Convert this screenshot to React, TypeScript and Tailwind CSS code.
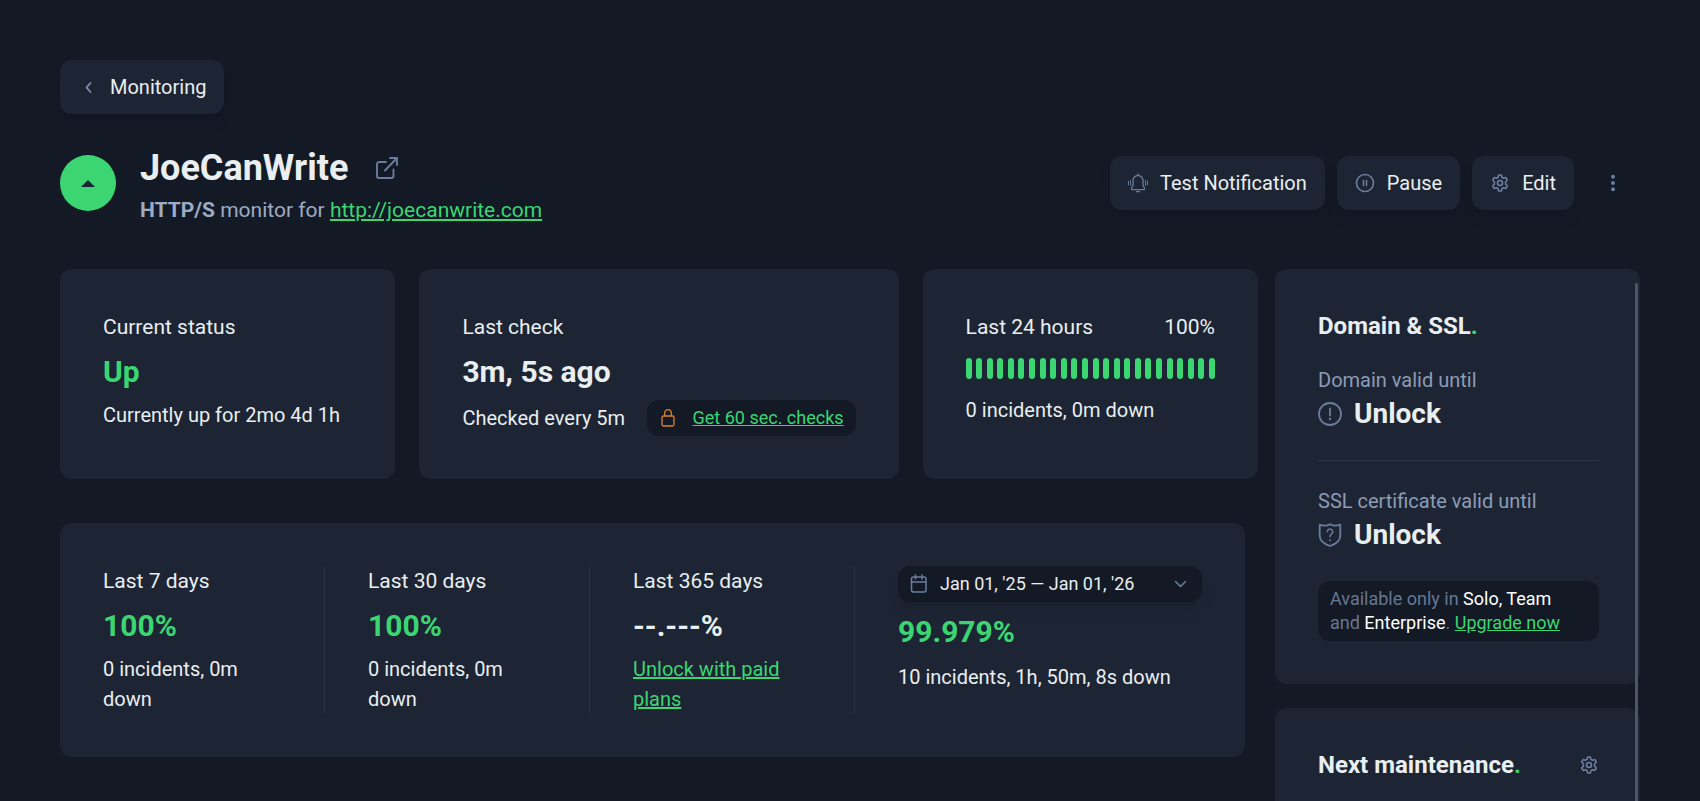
import { ReactNode } from "react";

const HOURS = Array.from({ length: 24 }, (_, hour) => hour);

interface IconProps {
  className?: string;
}

function ChevronLeftIcon({ className }: IconProps) {
  return (
    <svg className={className} viewBox="0 0 20 20" fill="none" stroke="currentColor" strokeWidth="1.8" strokeLinecap="round" strokeLinejoin="round" aria-hidden="true">
      <path d="M12.500 6l-4 4.500 4 4.500" />
    </svg>
  );
}

function ChevronDownIcon({ className }: IconProps) {
  return (
    <svg className={className} viewBox="0 0 20 20" fill="none" stroke="currentColor" strokeWidth="1.5" strokeLinecap="round" strokeLinejoin="round" aria-hidden="true">
      <path d="M5.500 7.500l5 5 5-5" />
    </svg>
  );
}

function ExternalIcon({ className }: IconProps) {
  return (
    <svg className={className} viewBox="0 0 22 22" fill="none" stroke="currentColor" strokeWidth="1.9" strokeLinecap="round" strokeLinejoin="round" aria-hidden="true">
      <path d="M10 5H3a2 2 0 0 0-2 2v12a2 2 0 0 0 2 2h12.500a2 2 0 0 0 2-2v-6.500" />
      <path d="M14 1h7v7M21 1L9 13.500" />
    </svg>
  );
}

function BellIcon({ className }: IconProps) {
  return (
    <svg className={className} viewBox="0 0 20 20" fill="none" stroke="currentColor" strokeWidth="1.3" strokeLinecap="round" strokeLinejoin="round" aria-hidden="true">
      <path d="M10 1v1.500M10 2.500a5 5 0 0 0-5 5v4.700L3.600 15c-.4.900 0 1.700.9 1.700h11c.9 0 1.300-.8.9-1.700L15 12.200V7.500a5 5 0 0 0-5-5z" />
      <path d="M8.600 18.700h2.800" />
      <path d="M2.500 7.500v5M.5 8.200v3.600M17.500 7.500v5M19.500 8.200v3.600" strokeWidth="0.9" />
    </svg>
  );
}

function PauseIcon({ className }: IconProps) {
  return (
    <svg className={className} viewBox="0 0 20 20" fill="none" stroke="currentColor" strokeWidth="1.6" strokeLinecap="round" aria-hidden="true">
      <circle cx="10" cy="10" r="8.500" />
      <path d="M8.500 7.500v5M11.500 7.500v5" />
    </svg>
  );
}

function GearIcon({ className }: IconProps) {
  return (
    <svg className={className} viewBox="0 0 20 20" fill="none" stroke="currentColor" strokeWidth="1.6" strokeLinejoin="round" aria-hidden="true">
      <path d="M8.600 2h2.800l.5 2.300 1.700 1 2.300-.7 1.400 2.400-1.700 1.700v2.600l1.700 1.700-1.400 2.400-2.300-.7-1.700 1-.5 2.300H8.600l-.5-2.300-1.700-1-2.300.7L2.700 13l1.700-1.700V8.700L2.700 7l1.400-2.400 2.300.7 1.700-1z" />
      <circle cx="10" cy="10" r="2.500" />
    </svg>
  );
}

function DotsIcon({ className }: IconProps) {
  return (
    <svg className={className} viewBox="0 0 20 20" fill="currentColor" aria-hidden="true">
      <circle cx="10" cy="3" r="2.200" />
      <circle cx="10" cy="10" r="2.200" />
      <circle cx="10" cy="17" r="2.200" />
    </svg>
  );
}

function LockIcon({ className }: IconProps) {
  return (
    <svg className={className} viewBox="0 0 14 18" fill="none" stroke="currentColor" strokeWidth="1.300" strokeLinejoin="round" aria-hidden="true">
      <rect x="1" y="7" width="12" height="10" rx="1.500" />
      <path d="M3.700 7V4a3.300 3.300 0 0 1 6.600 0v3" />
    </svg>
  );
}

function CalendarIcon({ className }: IconProps) {
  return (
    <svg className={className} viewBox="0 0 18 20" fill="none" stroke="currentColor" strokeWidth="1.500" strokeLinecap="round" strokeLinejoin="round" aria-hidden="true">
      <rect x="1.500" y="3" width="14.500" height="15" rx="2" />
      <path d="M1.500 8h14.500M5.500 1v4M12 1v4" />
    </svg>
  );
}

function AlertIcon({ className }: IconProps) {
  return (
    <svg className={className} viewBox="0 0 24 24" fill="none" stroke="currentColor" strokeWidth="1.800" strokeLinecap="round" aria-hidden="true">
      <circle cx="12" cy="12" r="11" />
      <path d="M12 6.500v7" />
      <circle cx="12" cy="17" r="1.200" fill="currentColor" stroke="none" />
    </svg>
  );
}

function ShieldIcon({ className }: IconProps) {
  return (
    <svg className={className} viewBox="0 0 24 24" fill="none" stroke="currentColor" strokeWidth="1.800" strokeLinecap="round" strokeLinejoin="round" aria-hidden="true">
      <path d="M12 1.200c2.500 1.500 6 2 10.300.5V12.500c0 5-4.300 8.500-10.300 10.500C6 21 1.700 17.500 1.700 12.500V1.700C6 3.200 9.500 2.700 12 1.200z" />
      <path d="M9.300 8.800a2.700 2.700 0 1 1 4.100 2.300c-1 .6-1.400 1.100-1.400 2.600" strokeWidth="1.500" />
      <circle cx="12" cy="17.300" r="1" fill="currentColor" stroke="none" />
    </svg>
  );
}

interface ActionButtonProps {
  icon: ReactNode;
  label: string;
}

function ActionButton({ icon, label }: ActionButtonProps) {
  return (
    <button type="button" className="flex h-[54px] items-center gap-3 rounded-xl bg-[#1d2534] px-[18px] text-xl text-[#e9eef0] shadow-lg shadow-black/10">
      {icon}
      {label}
    </button>
  );
}

interface PeriodProps {
  title: string;
  value: string;
  valueColor: string;
  children: ReactNode;
}

function Period({ title, value, valueColor, children }: PeriodProps) {
  return (
    <div className="border-r border-[#2a3241] px-[43px]">
      <h3 className="text-[21px] leading-[30px]">{title}</h3>
      <p className={`mt-3 text-[30px] leading-9 font-bold ${valueColor}`}>{value}</p>
      <p className="mt-2.5 text-xl leading-[30px]">{children}</p>
    </div>
  );
}

export default function App() {
  return (
    <div className="flex h-screen flex-col overflow-hidden bg-[#131a26] px-[60px] pt-[60px] font-['Roboto',sans-serif] text-[#e9eef0]">
      <nav className="flex">
        <ActionButton icon={<ChevronLeftIcon className="size-5 text-[#8290ab]" />} label="Monitoring" />
      </nav>

      <header className="mt-7 flex items-center justify-between">
        <div className="flex items-center gap-6">
          <div className="flex size-14 items-center justify-center rounded-full bg-[#3bd671]">
            <svg className="h-[7px] w-3.5 text-[#1d2534]" viewBox="0 0 14 7" fill="currentColor" aria-label="Up">
              <path d="M7 0l7 7H0z" />
            </svg>
          </div>
          <div>
            <div className="flex items-center gap-7">
              <h1 className="text-4xl leading-[52px] font-bold">JoeCanWrite</h1>
              <a href="#open" aria-label="Open site">
                <ExternalIcon className="size-[22px] text-[#6b7d9e]" />
              </a>
            </div>
            <p className="mt-0.5 text-[21px] leading-7 text-[#9dabc3]">
              <strong>HTTP/S</strong> monitor for{" "}
              <a href="http://joecanwrite.com" className="text-[#3bd671] underline">http://joecanwrite.com</a>
            </p>
          </div>
        </div>

        <div className="flex gap-3">
          <ActionButton icon={<BellIcon className="size-5 text-[#6b7d9e]" />} label="Test Notification" />
          <ActionButton icon={<PauseIcon className="size-5 text-[#6b7d9e]" />} label="Pause" />
          <ActionButton icon={<GearIcon className="size-5 text-[#6b7d9e]" />} label="Edit" />
          <button type="button" aria-label="More actions" className="flex size-[54px] items-center justify-center">
            <DotsIcon className="size-[18px] text-[#6b7d9e]" />
          </button>
        </div>
      </header>

      <div className="mt-[45px] flex min-h-0 flex-1 gap-[17px]">
        <main className="min-w-0 flex-1">
          <div className="grid grid-cols-[7fr_10fr_7fr] gap-6">
            <section className="rounded-xl bg-[#1d2534] p-[43px]">
              <h3 className="text-[21px] leading-[30px]">Current status</h3>
              <p className="mt-3 text-[30px] leading-9 font-bold text-[#3bd671]">Up</p>
              <p className="mt-2.5 text-xl leading-[30px] whitespace-nowrap">Currently up for 2mo 4d 1h</p>
            </section>

            <section className="rounded-xl bg-[#1d2534] p-[43px]">
              <h3 className="text-[21px] leading-[30px]">Last check</h3>
              <p className="mt-3 text-[30px] leading-9 font-bold">3m, 5s ago</p>
              <div className="mt-2.5 flex items-center justify-between text-xl whitespace-nowrap">
                <span>Checked every 5m</span>
                <span className="flex h-9 items-center gap-[18px] rounded-xl bg-[#131a26] pr-3 pl-3.5 text-lg">
                  <LockIcon className="h-[18px] w-3.5 text-[#d9822b]" />
                  <a href="#plans" className="text-[#3bd671] underline">Get 60 sec. checks</a>
                </span>
              </div>
            </section>

            <section className="rounded-xl bg-[#1d2534] p-[43px]">
              <div className="flex justify-between text-[21px] leading-[30px] whitespace-nowrap">
                <h3>Last 24 hours</h3>
                <span>100%</span>
              </div>
              <div className="mt-4 flex h-[21px] justify-between">
                {HOURS.map((hour) => (
                  <span key={hour} className="w-1.5 rounded-full bg-[#3bd671]" />
                ))}
              </div>
              <p className="mt-4 text-xl leading-[30px]">0 incidents, 0m down</p>
            </section>
          </div>

          <section className="mt-11 mr-[13px] grid grid-cols-[265fr_265fr_265fr_390fr] rounded-xl bg-[#1d2534] py-[43px]">
            <Period title="Last 7 days" value="100%" valueColor="text-[#3bd671]">0 incidents, 0m down</Period>
            <Period title="Last 30 days" value="100%" valueColor="text-[#3bd671]">0 incidents, 0m down</Period>
            <Period title="Last 365 days" value="--.---%" valueColor="text-[#e9eef0]">
              <a href="#plans" className="text-[#3bd671] underline">Unlock with paid plans</a>
            </Period>
            <div className="px-[43px]">
              <button type="button" className="flex h-9 w-full items-center rounded-xl bg-[#131a26] px-3 text-lg whitespace-nowrap shadow-lg shadow-black/10">
                <CalendarIcon className="mr-3 h-5 w-[18px] text-[#6b7d9e]" />
                Jan 01, '25 — Jan 01, '26
                <ChevronDownIcon className="ml-auto size-5 text-[#6b7d9e]" />
              </button>
              <p className="mt-3 text-[30px] leading-9 font-bold text-[#3bd671]">99.979%</p>
              <p className="mt-3 text-xl leading-[30px]">10 incidents, 1h, 50m, 8s down</p>
            </div>
          </section>
        </main>

        <aside className="relative flex w-[365px] flex-col gap-6">
          <section className="shrink-0 rounded-xl bg-[#1d2534] py-[43px] pr-[41px] pl-[43px]">
            <h2 className="text-2xl leading-7 font-bold">
              Domain &amp; SSL<span className="text-[#3bd671]">.</span>
            </h2>
            <p className="mt-7 text-xl leading-6 text-[#8d9bb5]">Domain valid until</p>
            <div className="mt-1 flex items-center gap-3">
              <AlertIcon className="size-6 text-[#6b7d9e]" />
              <span className="text-[28px] leading-9 font-bold">Unlock</span>
            </div>
            <hr className="my-7 border-[#2e3645]" />
            <p className="text-xl leading-6 text-[#8d9bb5]">SSL certificate valid until</p>
            <div className="mt-1 flex items-center gap-3">
              <ShieldIcon className="size-6 text-[#6b7d9e]" />
              <span className="text-[28px] leading-9 font-bold">Unlock</span>
            </div>
            <p className="mt-7 rounded-xl bg-[#131a26] py-1.5 pr-8 pl-3 text-lg leading-6 text-[#687790]">
              Available only in <span className="text-white">Solo, Team</span> and{" "}
              <span className="text-white">Enterprise</span>.{" "}
              <a href="#plans" className="text-[#3bd671] underline">Upgrade now</a>
            </p>
          </section>

          <section className="flex flex-1 items-start justify-between rounded-t-xl bg-[#1d2534] pt-[43px] pr-[41px] pl-[43px]">
            <h2 className="text-2xl leading-7 font-bold">
              Next maintenance<span className="text-[#3bd671]">.</span>
            </h2>
            <button type="button" aria-label="Maintenance settings" className="flex h-7 items-center">
              <GearIcon className="size-5 text-[#6b7d9e]" />
            </button>
          </section>

          {/* scroll thumb */}
          <div className="absolute top-3.5 right-0.5 bottom-0 w-[3px] rounded-t-full bg-[#4b566b]" />
        </aside>
      </div>
    </div>
  );
}
